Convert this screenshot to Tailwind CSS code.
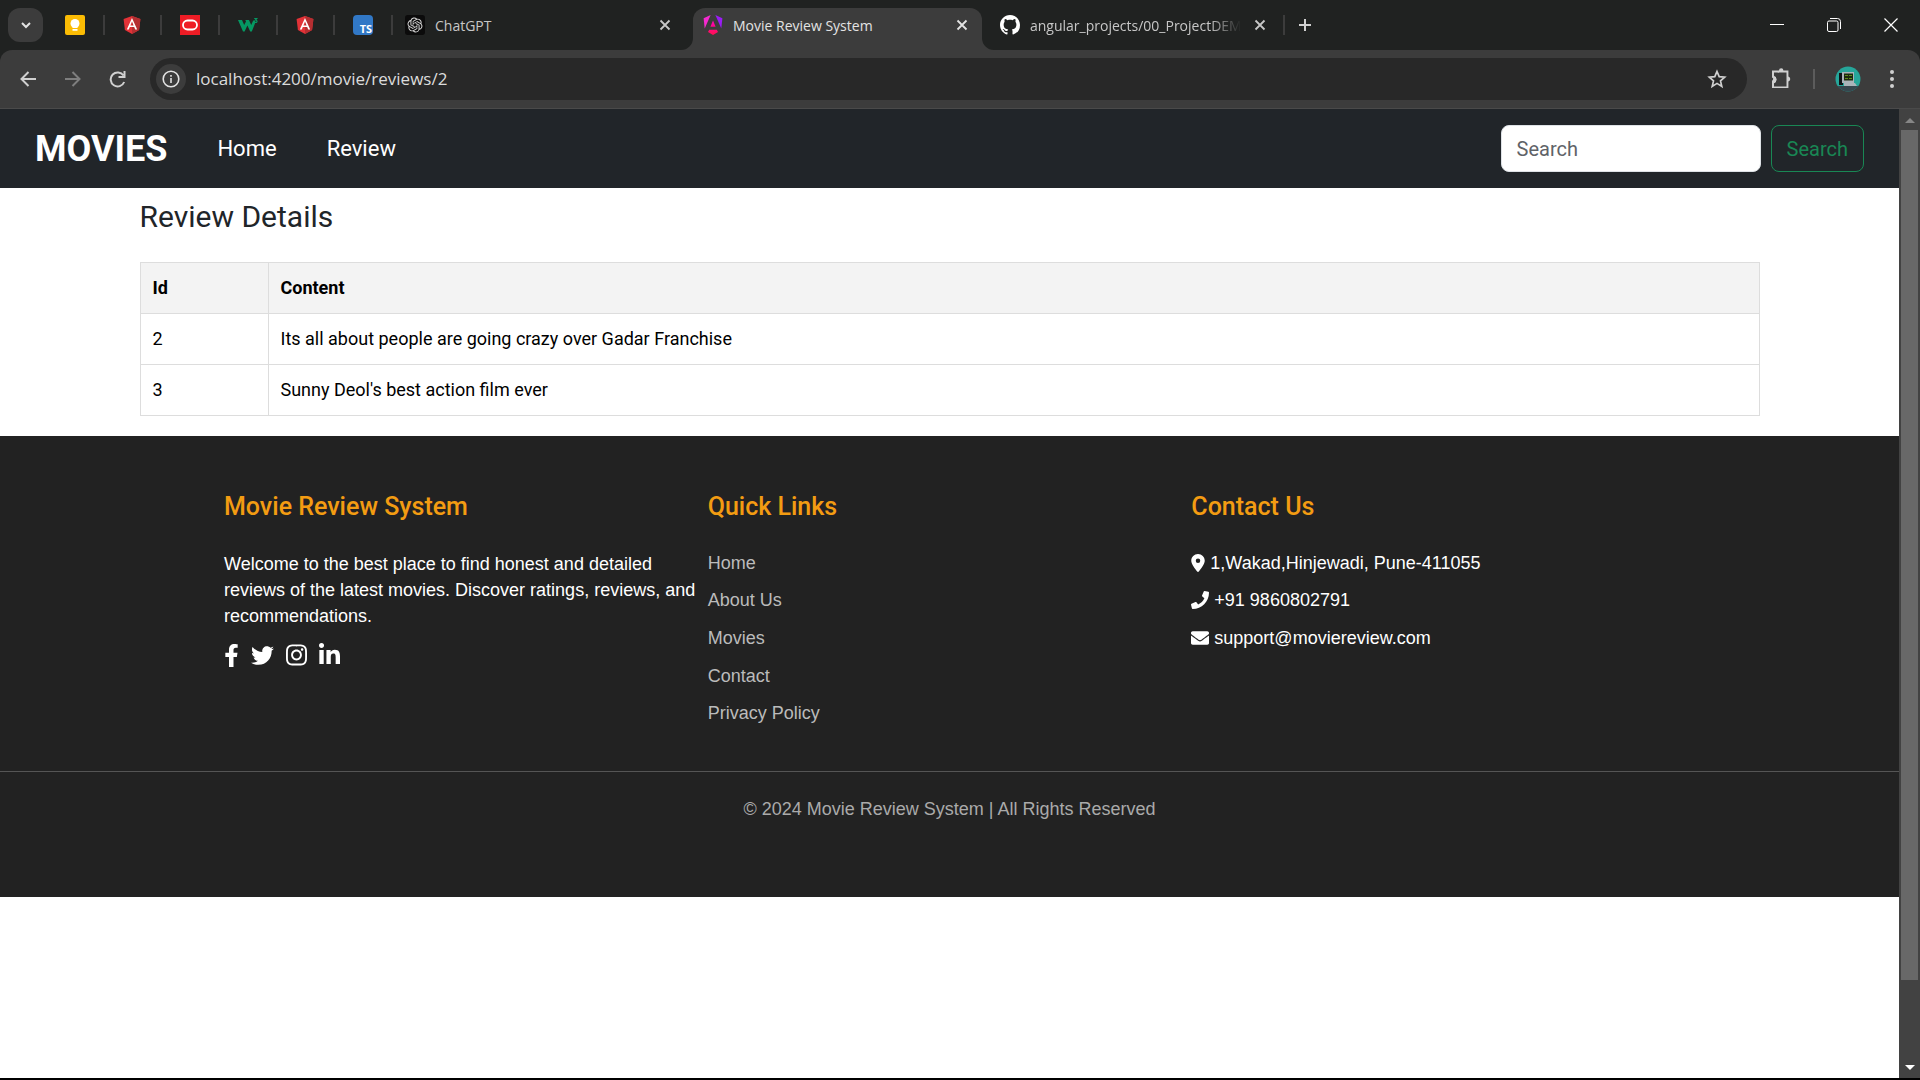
<!DOCTYPE html>
<html lang="en">
<head>
<meta charset="utf-8">
<meta name="viewport" content="width=device-width, initial-scale=1">
<title>Movie Review System</title>
<script src="https://cdn.jsdelivr.net/npm/@tailwindcss/browser@4"></script>
</head>
<body class="flex h-screen flex-col overflow-hidden bg-black font-['Roboto',sans-serif]">

<!-- Shared icon shapes -->
<svg class="hidden" aria-hidden="true">
  <symbol id="shield" viewBox="0 0 20 20">
    <path fill="#e23237" d="M10 1 1.6 4l1.3 11L10 19l7.1-4L18.400 4z"/>
    <path fill="#b52e31" d="M10 1v18l7.100-4L18.400 4z"/>
    <path fill="#fff" d="M10 3 4.800 14.600h2l1-2.600h4.400l1 2.600h2zm1.600 7.400H8.400L10 6.600z"/>
  </symbol>
  <symbol id="cross" viewBox="0 0 12 12">
    <path d="m1.500 1.500 9 9m0-9-9 9" fill="none" stroke="currentColor" stroke-width="1.800"/>
  </symbol>
</svg>

<header class="shrink-0 bg-[#202221] font-['Open_Sans',sans-serif] text-[#c7c7c7]">
  <!-- Tab strip -->
  <div class="flex h-[50px] items-center">
    <button aria-label="Search tabs" class="ml-2 flex h-[34px] w-[35px] shrink-0 items-center justify-center rounded-xl bg-[#3c3c3c]">
      <svg class="size-3" viewBox="0 0 12 12"><path d="m2 4 4 4 4-4" fill="none" stroke="#e3e3e3" stroke-width="2"/></svg>
    </button>
    <div class="ml-1 grid w-[346px] shrink-0 grid-cols-6">
      <button aria-label="Keep" class="flex h-5 items-center justify-center border-r-2 border-[#3c3c3c]">
        <svg class="size-5" viewBox="0 0 20 20"><rect width="20" height="20" rx="2" fill="#fbbc04"/><circle cx="10" cy="8.500" r="4.500" fill="#fff"/><path fill="#fff" d="M7.500 11h5v2h-5zM7.500 14h5v1.700h-5z"/></svg>
      </button>
      <button aria-label="Angular" class="flex h-5 items-center justify-center border-r-2 border-[#3c3c3c]"><svg class="size-5"><use href="#shield"/></svg></button>
      <button aria-label="Oracle" class="flex h-5 items-center justify-center border-r-2 border-[#3c3c3c]">
        <svg class="size-5" viewBox="0 0 20 20"><rect width="20" height="20" fill="#ee1c25"/><rect x="3" y="5.500" width="14" height="9" rx="4.500" fill="none" stroke="#fff" stroke-width="1.800"/></svg>
      </button>
      <button aria-label="W3Schools" class="flex h-5 items-center justify-center border-r-2 border-[#3c3c3c]">
        <svg class="size-5" viewBox="0 0 20 20"><path fill="#059862" d="M0 5h4l2.200 5L8 6.500 7.300 5h3.700l2.200 5 2-4.500h2.200L17 8.500 13.800 16.500h-1.600L9.400 10.500 6.600 16.500H5z"/><path fill="none" stroke="#059862" stroke-width="1.200" d="M16.200 3.500h2.600L17.500 5c2 0 2 2.500.2 2.500-.8 0-1.200-.2-1.600-.6"/></svg>
      </button>
      <button aria-label="Angular" class="flex h-5 items-center justify-center border-r-2 border-[#3c3c3c]"><svg class="size-5"><use href="#shield"/></svg></button>
      <button aria-label="TypeScript" class="flex h-5 items-center justify-center border-r-2 border-[#3c3c3c]">
        <span class="flex size-5 items-end justify-end rounded-sm bg-[#3178c6] pr-px text-[11px] leading-3 font-bold text-white">TS</span>
      </button>
    </div>

    <div class="flex h-full w-[300px] shrink-0 items-center pr-[22px] pl-3">
      <svg class="size-5 shrink-0" viewBox="0 0 36 36"><rect width="36" height="36" rx="5" fill="#0b0b0b"/><path transform="translate(4.500 4.500) scale(1.125)" fill="#d8d8d8" d="M22.282 9.821a5.985 5.985 0 0 0-.516-4.910 6.046 6.046 0 0 0-6.510-2.900A6.065 6.065 0 0 0 4.981 4.182a5.985 5.985 0 0 0-3.998 2.900 6.046 6.046 0 0 0 .743 7.097 5.980 5.980 0 0 0 .510 4.911 6.051 6.051 0 0 0 6.515 2.900A5.985 5.985 0 0 0 13.260 24a6.056 6.056 0 0 0 5.772-4.206 5.990 5.990 0 0 0 3.998-2.900 6.056 6.056 0 0 0-.747-7.073zM13.260 22.430a4.476 4.476 0 0 1-2.876-1.040l.141-.081 4.779-2.758a.795.795 0 0 0 .392-.681v-6.737l2.020 1.169a.071.071 0 0 1 .038.052v5.583a4.504 4.504 0 0 1-4.494 4.493zM3.600 18.304a4.471 4.471 0 0 1-.535-3.014l.142.085 4.783 2.759a.771.771 0 0 0 .780 0l5.843-3.369v2.333a.080.080 0 0 1-.033.061L9.740 19.950a4.499 4.499 0 0 1-6.140-1.646zM2.340 7.896a4.485 4.485 0 0 1 2.366-1.973v5.678a.766.766 0 0 0 .388.677l5.815 3.355-2.020 1.168a.076.076 0 0 1-.071 0l-4.830-2.787A4.504 4.504 0 0 1 2.340 7.896zm16.597 3.856L13.104 8.364l2.015-1.164a.076.076 0 0 1 .071 0l4.830 2.792a4.494 4.494 0 0 1-.676 8.104v-5.677a.790.790 0 0 0-.407-.667zm2.011-3.024l-.142-.085-4.774-2.782a.776.776 0 0 0-.785 0L9.409 9.230V6.897a.066.066 0 0 1 .028-.061l4.830-2.787a4.499 4.499 0 0 1 6.681 4.660zM8.307 12.863l-2.020-1.164a.080.080 0 0 1-.038-.057V6.074a4.499 4.499 0 0 1 7.376-3.453l-.142.080L8.704 5.460a.795.795 0 0 0-.393.681zm1.097-2.365l2.602-1.500 2.607 1.500v2.999l-2.597 1.500-2.607-1.500z"/></svg>
      <span class="ml-[10px] grow text-[14px]">ChatGPT</span>
      <button aria-label="Close tab"><svg class="size-3"><use href="#cross"/></svg></button>
    </div>

    <div class="relative flex h-[42px] w-[289px] shrink-0 items-center self-end rounded-t-xl bg-[#3c3c3c] pr-[14px] pb-2 pl-[10px] text-[#e3e3e3]">
      <svg class="absolute bottom-0 -left-3 size-3" viewBox="0 0 12 12"><path fill="#3c3c3c" d="M12 0v12H0A12 12 0 0 0 12 0"/></svg>
      <svg class="absolute -right-3 bottom-0 size-3" viewBox="0 0 12 12"><path fill="#3c3c3c" d="M0 0v12h12A12 12 0 0 1 0 0"/></svg>
      <svg class="size-5 shrink-0" viewBox="0 0 20 20">
        <defs><linearGradient id="ng" x1="0" y1="0" x2="0" y2="1"><stop offset="0" stop-color="#f0b"/><stop offset="1" stop-color="#ff1050"/></linearGradient></defs>
        <path fill="#f52ad0" d="M7.600 0 .6 3.300l1.100 10.200z"/><path fill="#9a1cf5" d="m12.400 0 7 3.300-1.100 10.200z"/><path fill="url(#ng)" d="m10 5.500 2.600 6.300H7.400zM6.200 14.700h7.600l1.200 2.300-5 3-5-3z"/>
      </svg>
      <span class="ml-[10px] grow text-[14px] whitespace-nowrap">Movie Review System</span>
      <button aria-label="Close tab"><svg class="size-3"><use href="#cross"/></svg></button>
    </div>

    <div class="flex h-5 w-[303px] shrink-0 items-center border-r-2 border-[#3c3c3c] pr-[17px] pl-[18px]">
      <svg class="size-5 shrink-0" viewBox="0 0 16 16"><path fill="#fff" d="M8 0C3.580 0 0 3.580 0 8c0 3.540 2.290 6.530 5.470 7.590.4.070.55-.17.55-.38 0-.19-.01-.82-.01-1.490-2.010.37-2.530-.49-2.690-.94-.09-.23-.48-.94-.82-1.130-.28-.15-.68-.52-.01-.53.63-.01 1.080.58 1.230.82.72 1.210 1.870.87 2.330.66.070-.52.28-.87.51-1.070-1.780-.2-3.640-.89-3.640-3.950 0-.87.31-1.590.82-2.150-.08-.2-.36-1.020.08-2.120 0 0 .67-.21 2.200.82.64-.18 1.320-.27 2-.27s1.360.09 2 .27c1.530-1.040 2.200-.82 2.200-.82.44 1.100.16 1.920.08 2.120.51.56.82 1.270.82 2.150 0 3.070-1.870 3.750-3.650 3.950.29.25.54.73.54 1.480 0 1.070-.01 1.930-.01 2.200 0 .21.15.46.55.38A8.010 8.010 0 0 0 16 8c0-4.420-3.580-8-8-8"/></svg>
      <span class="mr-[13px] ml-[10px] min-w-0 grow mask-r-from-85% mask-r-to-100% text-[14px] whitespace-nowrap">angular_projects/00_ProjectDEM</span>
      <button aria-label="Close tab" class="shrink-0"><svg class="size-3"><use href="#cross"/></svg></button>
    </div>
    <button aria-label="New tab" class="ml-3"><svg class="size-4" viewBox="0 0 16 16"><path d="M8 2v12M2 8h12" stroke="#d0d0d0" stroke-width="2"/></svg></button>

    <div class="ml-auto flex items-center gap-[43px] pr-[22px] text-white">
      <button aria-label="Minimize"><svg class="size-[14px]" viewBox="0 0 14 14"><path d="M0 6.500h14" stroke="currentColor"/></svg></button>
      <button aria-label="Restore"><svg class="size-[14px]" viewBox="0 0 14 14" fill="none" stroke="currentColor"><rect x=".5" y="3" width="10.500" height="10.500" rx="1.500"/><path d="M3 .5h7.500a3 3 0 0 1 3 3V11"/></svg></button>
      <button aria-label="Close"><svg class="size-[14px]" viewBox="0 0 14 14"><path d="m.5.5 13 13m0-13-13 13" stroke="currentColor" stroke-width="1.200"/></svg></button>
    </div>
  </div>

  <!-- Toolbar -->
  <div class="flex h-[59px] items-center rounded-t-xl border-b border-[#4a4a4a] bg-[#3c3c3c] pr-5 pl-5">
    <button aria-label="Back"><svg class="size-4" viewBox="0 0 16 16"><path d="M16 8H2M8.500 1 1.500 8l7 7" fill="none" stroke="#d0d0d0" stroke-width="2"/></svg></button>
    <button aria-label="Forward" class="ml-[29px]"><svg class="size-4" viewBox="0 0 16 16"><path d="M0 8h14M7.500 1l7 7-7 7" fill="none" stroke="#7e7e7e" stroke-width="2"/></svg></button>
    <button aria-label="Reload" class="ml-[28px]"><svg class="size-[17px]" viewBox="0 0 17 17"><path d="M14.500 4.500A7 7 0 1 0 15.200 11M15.500 0v6H9.500" fill="none" stroke="#d0d0d0" stroke-width="2"/></svg></button>
    <div class="ml-6 flex h-[42px] grow items-center rounded-full bg-[#282828] pr-5 pl-[6px]">
      <button aria-label="Site information" class="flex size-[30px] shrink-0 items-center justify-center rounded-full bg-[#3c3c3c]">
        <svg class="size-[18px]" viewBox="0 0 18 18"><circle cx="9" cy="9" r="7.800" fill="none" stroke="#e3e3e3" stroke-width="1.600"/><path d="M9 8v5M9 5v1.800" stroke="#e3e3e3" stroke-width="1.600"/></svg>
      </button>
      <input aria-label="Address" value="localhost:4200/movie/reviews/2" class="ml-[10px] min-w-0 grow bg-transparent text-[17px] text-[#dcdcdc] outline-none">
      <button aria-label="Bookmark"><svg class="size-5" viewBox="0 0 20 20"><path d="m10 2.500 2.200 5.200 5.500.5-4.200 3.700 1.300 5.500-4.800-3-4.800 3 1.300-5.500L2.300 8.200l5.500-.5z" fill="none" stroke="#d0d0d0" stroke-width="1.700"/></svg></button>
    </div>
    <button aria-label="Extensions" class="ml-6"><svg class="size-[22px]" viewBox="0 0 22 22"><path fill="#d0d0d0" d="M8 2.500a2.200 2.200 0 0 1 4.400 0h5v6a2.600 2.600 0 0 1 0 5v6.500H1V13z"/><path fill="#3c3c3c" d="M3 4.500h12.500v14H3v-3.300a4 4 0 0 0 0-7.400z"/><path fill="#d0d0d0" d="M1 2.500h7v2H3v3.300a4 4 0 0 1 0 7.400v2.800H1v-4.400a2.300 2.300 0 0 0 0-4.200z"/></svg></button>
    <span class="ml-5 h-5 w-[2px] bg-[#5c5c5c]"></span>
    <button aria-label="Profile" class="ml-5"><svg class="size-[26px]" viewBox="0 0 26 26"><clipPath id="av"><circle cx="13" cy="13" r="12.500"/></clipPath><g clip-path="url(#av)"><path fill="#26a69a" d="M0 0h26v26H0z"/><path fill="#37474f" d="M0 20h26v6H0z"/><path fill="#101418" d="M4 7h4v12H4z"/><path fill="#aab4ba" d="M7 6h12v11H7zM9 17h11l2 3H9z"/><path fill="#1c2a10" d="M9 7.500h9v7H9z"/><path stroke="#5d8f1e" stroke-dasharray="3 1" d="M10 9.500h7M10 12.500h7"/></g></svg></button>
    <button aria-label="Menu" class="ml-[23px]"><svg class="h-5 w-[16px]" viewBox="0 0 16 20" fill="#d0d0d0"><circle cx="8" cy="3" r="2"/><circle cx="8" cy="10" r="2"/><circle cx="8" cy="17" r="2"/></svg></button>
  </div>
</header>

<div class="mb-[2px] flex min-h-0 grow">
  <div class="min-w-0 grow overflow-hidden bg-white">
    <nav class="flex h-[79px] items-center bg-[#212529] px-[35px] text-[22px] text-white">
      <a href="#" class="text-[36px] leading-none font-bold">MOVIES</a>
      <a href="#" class="ml-[50px]">Home</a>
      <a href="#" class="ml-[50px]">Review</a>
      <form class="ml-auto flex gap-[10px] text-[20px]">
        <input type="search" aria-label="Search" placeholder="Search" class="h-[47px] w-[260px] rounded-lg border border-[#dee2e6] bg-white px-[15px] text-[#212529] placeholder:text-[#5f6368]">
        <button type="button" class="h-[47px] rounded-lg border border-[#198754] px-[15px] text-[#198754]">Search</button>
      </form>
    </nav>

    <main class="mx-auto max-w-[1620px] pt-[10px] pb-5">
      <h2 class="mb-[26px] text-[30px] leading-[38px] text-[#212529]">Review Details</h2>
      <table class="w-full table-fixed border-collapse text-left text-[18px] leading-[26px] text-black">
        <colgroup><col class="w-32"><col></colgroup>
        <thead>
          <tr class="bg-[#f3f3f3]"><th class="border border-[#ddd] px-3 py-3 font-bold">Id</th><th class="border border-[#ddd] px-3 py-3 font-bold">Content</th></tr>
        </thead>
        <tbody>
          <tr><td class="border border-[#ddd] px-3 py-3">2</td><td class="border border-[#ddd] px-3 py-3">Its all about people are going crazy over Gadar Franchise</td></tr>
          <tr><td class="border border-[#ddd] px-3 py-3">3</td><td class="border border-[#ddd] px-3 py-3">Sunny Deol's best action film ever</td></tr>
        </tbody>
      </table>
    </main>

    <footer class="bg-[#222] pt-[55px] pb-[75px] font-['Liberation_Sans',Arial,sans-serif] text-[18px] leading-[26px] text-white">
      <div class="mx-auto grid max-w-[1451px] grid-cols-3">
        <section>
          <h3 class="mb-7 font-['Roboto',sans-serif] text-[25px] leading-8 font-medium text-[#f39c12]">Movie Review System</h3>
          <p>Welcome to the best place to find honest and detailed reviews of the latest movies. Discover ratings, reviews, and recommendations.</p>
          <div class="mt-[14px] flex items-center gap-3">
            <a href="#" aria-label="Facebook"><svg class="h-[23px] w-[15px]" viewBox="0 0 320 512" fill="currentColor"><path d="M279.140 288l14.220-92.660h-88.910v-60.130c0-25.350 12.420-50.060 52.240-50.060h40.420V6.260S260.430 0 225.360 0c-73.220 0-121.080 44.380-121.080 124.720v70.620H22.890V288h81.390v224h100.170V288z"/></svg></a>
            <a href="#" aria-label="Twitter"><svg class="size-[23px]" viewBox="0 0 512 512" fill="currentColor"><path d="M459.370 151.716c.325 4.548.325 9.097.325 13.645 0 138.720-105.583 298.558-298.558 298.558-59.452 0-114.680-17.219-161.137-47.106 8.447.974 16.568 1.299 25.340 1.299 49.055 0 94.213-16.568 130.274-44.832-46.132-.975-84.792-31.188-98.112-72.772 6.498.974 12.995 1.624 19.818 1.624 9.421 0 18.843-1.300 27.614-3.573-48.081-9.747-84.143-51.980-84.143-102.985v-1.299c13.969 7.797 30.214 12.670 47.431 13.319-28.264-18.843-46.781-51.005-46.781-87.391 0-19.492 5.197-37.360 14.294-52.954 51.655 63.675 129.300 105.258 216.365 109.807-1.624-7.797-2.599-15.918-2.599-24.040 0-57.828 46.782-104.934 104.934-104.934 30.213 0 57.502 12.670 76.670 33.137 23.715-4.548 46.456-13.320 66.599-25.340-7.798 24.366-24.366 44.833-46.132 57.827 21.117-2.273 41.584-8.122 60.426-16.243-14.292 20.791-32.161 39.308-52.628 54.253z"/></svg></a>
            <a href="#" aria-label="Instagram"><svg class="h-[24px] w-[21px]" viewBox="0 0 448 512" fill="currentColor"><path d="M224.100 141c-63.600 0-114.900 51.300-114.900 114.900s51.300 114.900 114.900 114.900S339 319.500 339 255.900 287.700 141 224.100 141zm0 189.600c-41.100 0-74.700-33.500-74.700-74.700s33.500-74.700 74.700-74.700 74.700 33.500 74.700 74.700-33.600 74.700-74.700 74.700zm146.400-194.300c0 14.900-12 26.800-26.800 26.800-14.900 0-26.800-12-26.800-26.800s12-26.800 26.800-26.800 26.800 12 26.800 26.800zm76.100 27.200c-1.700-35.900-9.900-67.700-36.200-93.900-26.200-26.200-58-34.400-93.900-36.200-37-2.100-147.900-2.100-184.900 0-35.800 1.700-67.600 9.900-93.900 36.100s-34.400 58-36.200 93.900c-2.100 37-2.100 147.900 0 184.900 1.700 35.900 9.900 67.700 36.200 93.900s58 34.400 93.900 36.200c37 2.100 147.900 2.100 184.900 0 35.900-1.700 67.700-9.900 93.900-36.200 26.200-26.200 34.400-58 36.200-93.900 2.100-37 2.100-147.800 0-184.800zM398.800 388c-7.800 19.600-22.900 34.700-42.600 42.600-29.500 11.700-99.500 9-132.100 9s-102.700 2.600-132.100-9c-19.600-7.800-34.700-22.900-42.600-42.600-11.700-29.500-9-99.500-9-132.100s-2.600-102.700 9-132.100c7.800-19.600 22.900-34.700 42.600-42.600 29.500-11.700 99.500-9 132.100-9s102.700-2.600 132.100 9c19.600 7.800 34.700 22.900 42.600 42.600 11.700 29.500 9 99.500 9 132.100s2.700 102.700-9 132.100z"/></svg></a>
            <a href="#" aria-label="LinkedIn"><svg class="h-[24px] w-[21px]" viewBox="0 0 448 512" fill="currentColor"><path d="M100.280 448H7.400V148.900h92.880zM53.790 108.100C24.090 108.100 0 83.500 0 53.800a53.790 53.790 0 0 1 107.580 0c0 29.700-24.100 54.300-53.790 54.300zM447.900 448h-92.680V302.400c0-34.700-.7-79.200-48.290-79.200-48.290 0-55.690 37.700-55.690 76.700V448h-92.780V148.900h89.080v40.800h1.300c12.400-23.500 42.690-48.300 87.880-48.300 94 0 111.280 61.900 111.280 142.300V448z"/></svg></a>
          </div>
        </section>
        <section>
          <h3 class="mb-[21px] font-['Roboto',sans-serif] text-[25px] leading-8 font-medium text-[#f39c12]">Quick Links</h3>
          <ul class="grid h-[188px] grid-rows-5 items-center text-[#bbb]">
            <li><a href="#">Home</a></li>
            <li><a href="#">About Us</a></li>
            <li><a href="#">Movies</a></li>
            <li><a href="#">Contact</a></li>
            <li><a href="#">Privacy Policy</a></li>
          </ul>
        </section>
        <section>
          <h3 class="mb-[21px] font-['Roboto',sans-serif] text-[25px] leading-8 font-medium text-[#f39c12]">Contact Us</h3>
          <ul class="grid h-[113px] grid-rows-3 items-center">
            <li class="flex items-center gap-[5px]"><svg class="h-[18px] w-[14px]" viewBox="0 0 384 512" fill="currentColor"><path d="M215.700 499.200C267 435 384 279.400 384 192 384 86 298 0 192 0S0 86 0 192c0 87.400 117 243 168.300 307.200 12.300 15.300 35.100 15.300 47.400 0zM192 128a64 64 0 1 1 0 128 64 64 0 1 1 0-128z"/></svg>1,Wakad,Hinjewadi, Pune-411055</li>
            <li class="flex items-center gap-[5px]"><svg class="size-[18px]" viewBox="0 0 512 512" fill="currentColor"><path d="M493.400 24.600l-104-24c-11.300-2.600-22.900 3.300-27.500 13.900l-48 112c-4.200 9.800-1.400 21.300 6.900 28l60.600 49.600c-36 76.700-98.900 140.500-177.200 177.200l-49.600-60.600c-6.800-8.300-18.200-11.100-28-6.900l-112 48C3.900 366.500-2 378.100.6 389.400l24 104C27.100 504.200 36.700 512 48 512c256.100 0 464-207.500 464-464 0-11.200-7.700-20.900-18.600-23.400z"/></svg>+91 9860802791</li>
            <li class="flex items-center gap-[5px]"><svg class="size-[18px]" viewBox="0 0 512 512" fill="currentColor"><path d="M502.300 190.800c3.900-3.100 9.700-.2 9.700 4.700V400c0 26.500-21.500 48-48 48H48c-26.500 0-48-21.500-48-48V195.600c0-5 5.700-7.800 9.700-4.700 22.400 17.400 52.100 39.500 154.100 113.600 21.100 15.400 56.700 47.800 92.200 47.600 35.700.3 72-32.800 92.300-47.600 102-74.100 131.600-96.300 154-113.700zM256 320c23.200.4 56.600-29.200 73.400-41.400 132.700-96.300 142.800-104.700 173.400-128.700 5.800-4.500 9.200-11.500 9.200-18.900v-19c0-26.500-21.500-48-48-48H48c-26.500 0-48 21.500-48 48v19c0 7.400 3.400 14.300 9.200 18.900 30.600 23.900 40.700 32.400 173.400 128.700 16.800 12.200 50.200 41.800 73.400 41.400z"/></svg>support@moviereview.com</li>
          </ul>
        </section>
      </div>
      <p class="mt-[39px] border-t border-[#555] pt-6 text-center text-[#aaa]">© 2024 Movie Review System | All Rights Reserved</p>
    </footer>
  </div>

  <!-- Page scrollbar -->
  <div class="flex w-[21px] shrink-0 flex-col items-center bg-[#424242]" aria-hidden="true">
    <svg class="h-[21px] w-[10px] shrink-0" viewBox="0 0 10 21"><path fill="#868686" d="m5 9 5 5H0z"/></svg>
    <div class="flex w-full grow flex-col px-[2px]"><div class="h-11/12 bg-[#686868]"></div></div>
    <svg class="h-[21px] w-[10px] shrink-0" viewBox="0 0 10 21"><path fill="#fff" d="M0 8h10l-5 5z"/></svg>
  </div>
</div>
</body>
</html>
